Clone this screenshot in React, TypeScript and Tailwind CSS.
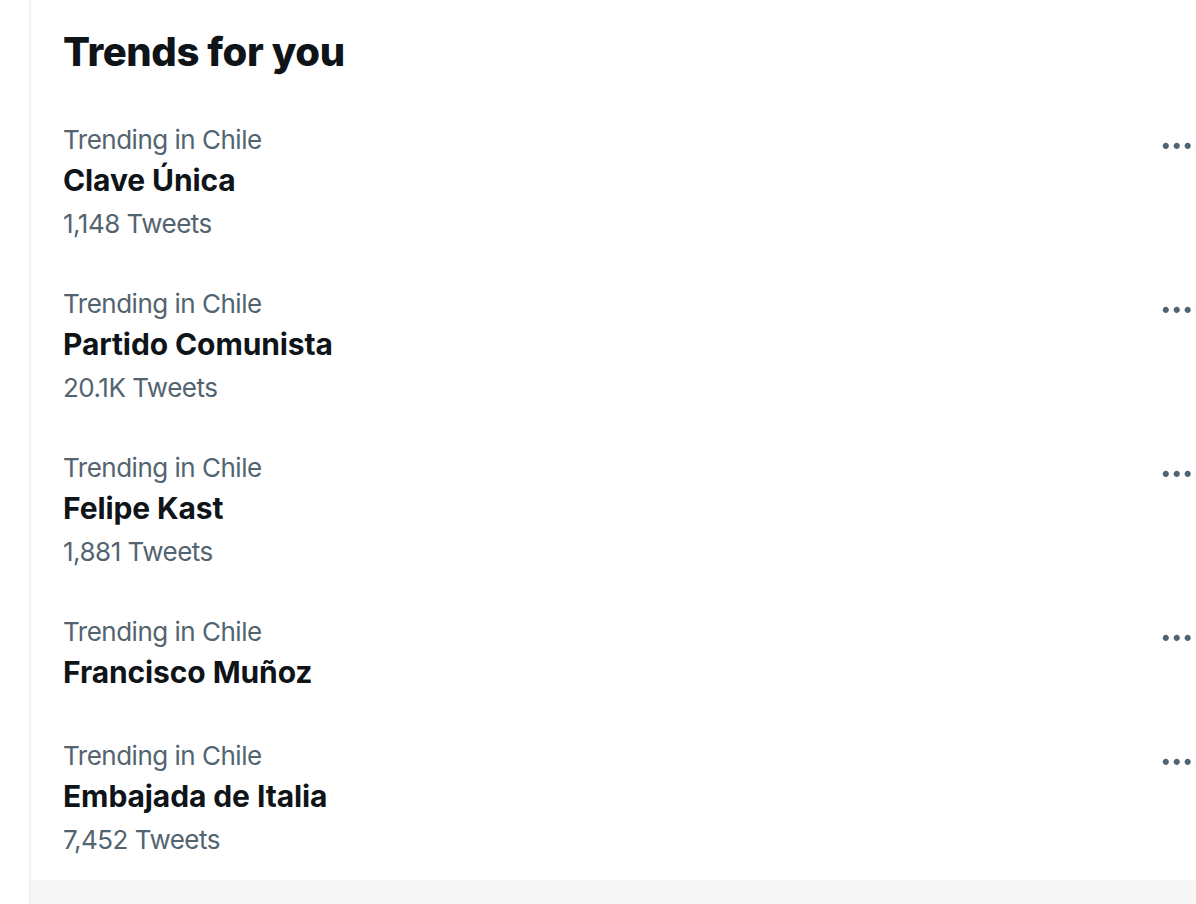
import React from "react";

type Trend = { cat: string; name: string; count?: string };

const trends: Trend[] = [
  { cat: "Trending in Chile", name: "Clave Única", count: "1,148 Tweets" },
  { cat: "Trending in Chile", name: "Partido Comunista", count: "20.1K Tweets" },
  { cat: "Trending in Chile", name: "Felipe Kast", count: "1,881 Tweets" },
  { cat: "Trending in Chile", name: "Francisco Muñoz" },
  { cat: "Trending in Chile", name: "Embajada de Italia", count: "7,452 Tweets" },
];

function More() {
  return (
    <svg viewBox="0 0 24 24" className="absolute right-[1px] top-[27px] w-[37.5px] h-[37.5px]" fill="#536471">
      <path d="M3 12c0-1.1.9-2 2-2s2 .9 2 2-.9 2-2 2-2-.9-2-2zm9 2c1.1 0 2-.9 2-2s-.9-2-2-2-2 .9-2 2 .9 2 2 2zm7 0c1.1 0 2-.9 2-2s-.9-2-2-2-2 .9-2 2 .9 2 2 2z" />
    </svg>
  );
}

export default function App() {
  return (
    <div
      className="w-[1196px] h-[904px] bg-white flex overflow-hidden"
      style={{ fontFamily: "Inter, 'Noto Sans', sans-serif" }}
    >
      <div className="w-[29px] shrink-0 bg-white" />
      <div className="flex-1 flex flex-col border-l-2 border-[#eff3f4]">
        <div className="bg-white pt-1">
          <div className="px-8 py-6">
            <h2 className="text-[40px] leading-[48px] font-extrabold tracking-[-0.4px] text-[#0f1419]">Trends for you</h2>
          </div>
          {trends.map((t, i) => (
            <div key={i} className="relative px-8 py-6">
              <div className="text-[26px] leading-[32px] tracking-[-0.5px] text-[#536471]">{t.cat}</div>
              <div className="pt-1 text-[30px] leading-[40px] font-bold tracking-[-0.1px] text-[#0f1419]">{t.name}</div>
              {t.count && (
                <div className="mt-2 text-[26px] leading-[32px] tracking-[-0.5px] text-[#536471]">{t.count}</div>
              )}
              <More />
            </div>
          ))}
        </div>
        <div className="flex-1 bg-[#f7f7f7]" />
      </div>
    </div>
  );
}
